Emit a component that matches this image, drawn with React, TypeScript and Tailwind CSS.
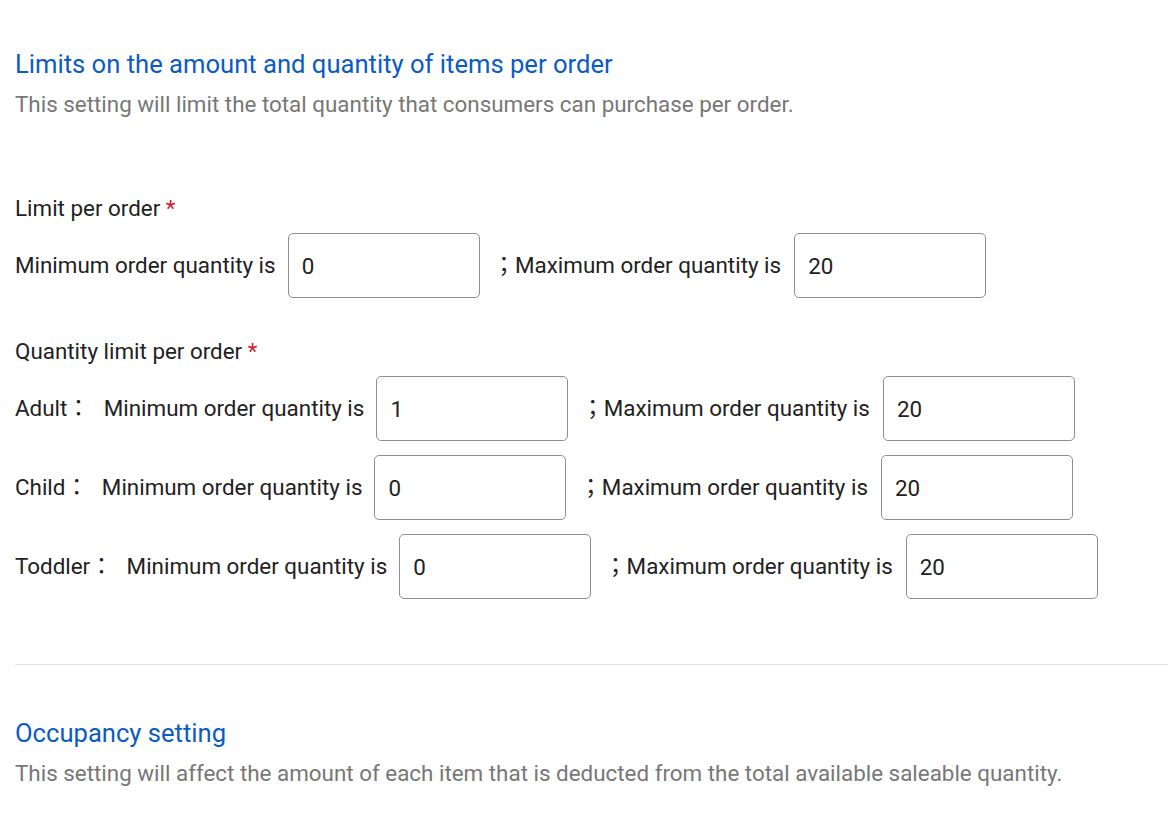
const FONT = { fontFamily: 'Roboto, "Noto Sans CJK TC", sans-serif' };

function QtyInput({ value }: { value: string }) {
  return (
    <input
      defaultValue={value}
      className="w-[192px] h-[65px] shrink-0 rounded-[5px] border border-[#8f8f8f] bg-white px-[13px] text-[22.4px] text-[#222] outline-none"
    />
  );
}

function Required({ label }: { label: string }) {
  return (
    <div className="text-[22.4px] leading-[30px] text-[#222]">
      {label} <span className="text-[#d9192f]">*</span>
    </div>
  );
}

function RangeRow({ prefix, min, max }: { prefix?: string; min: string; max: string }) {
  return (
    <div className="flex items-center text-[22.4px] text-[#222]">
      {prefix && <span className="mr-[14px]">{prefix}：</span>}
      <span className="mr-[12px]">Minimum order quantity is</span>
      <QtyInput value={min} />
      <span className="ml-[13px] mr-[13px]">；Maximum order quantity is</span>
      <QtyInput value={max} />
    </div>
  );
}

export default function App() {
  return (
    <div className="min-h-screen bg-white pl-[15px] pt-[48px]" style={FONT}>
      {/* Order limits */}
      <h2 className="text-[25.6px] leading-[32px] text-[#0a5bc4]">
        Limits on the amount and quantity of items per order
      </h2>
      <p className="mt-[9px] text-[22.4px] leading-[30px] text-[#777]">
        This setting will limit the total quantity that consumers can purchase per order.
      </p>

      <div className="mt-[74px]">
        <Required label="Limit per order" />
        <div className="mt-[10px]">
          <RangeRow min="0" max="20" />
        </div>
      </div>

      <div className="mt-[38px]">
        <Required label="Quantity limit per order" />
        <div className="mt-[10px] flex flex-col gap-[14px]">
          <RangeRow prefix="Adult" min="1" max="20" />
          <RangeRow prefix="Child" min="0" max="20" />
          <RangeRow prefix="Toddler" min="0" max="20" />
        </div>
      </div>

      <div className="mt-[65px] border-t border-[#e0e0e0]" />

      {/* Occupancy */}
      <h2 className="mt-[52px] text-[25.6px] leading-[32px] text-[#0a5bc4]">Occupancy setting</h2>
      <p className="mt-[9px] text-[22.4px] leading-[30px] text-[#777]">
        This setting will affect the amount of each item that is deducted from the total available saleable quantity.
      </p>
    </div>
  );
}
